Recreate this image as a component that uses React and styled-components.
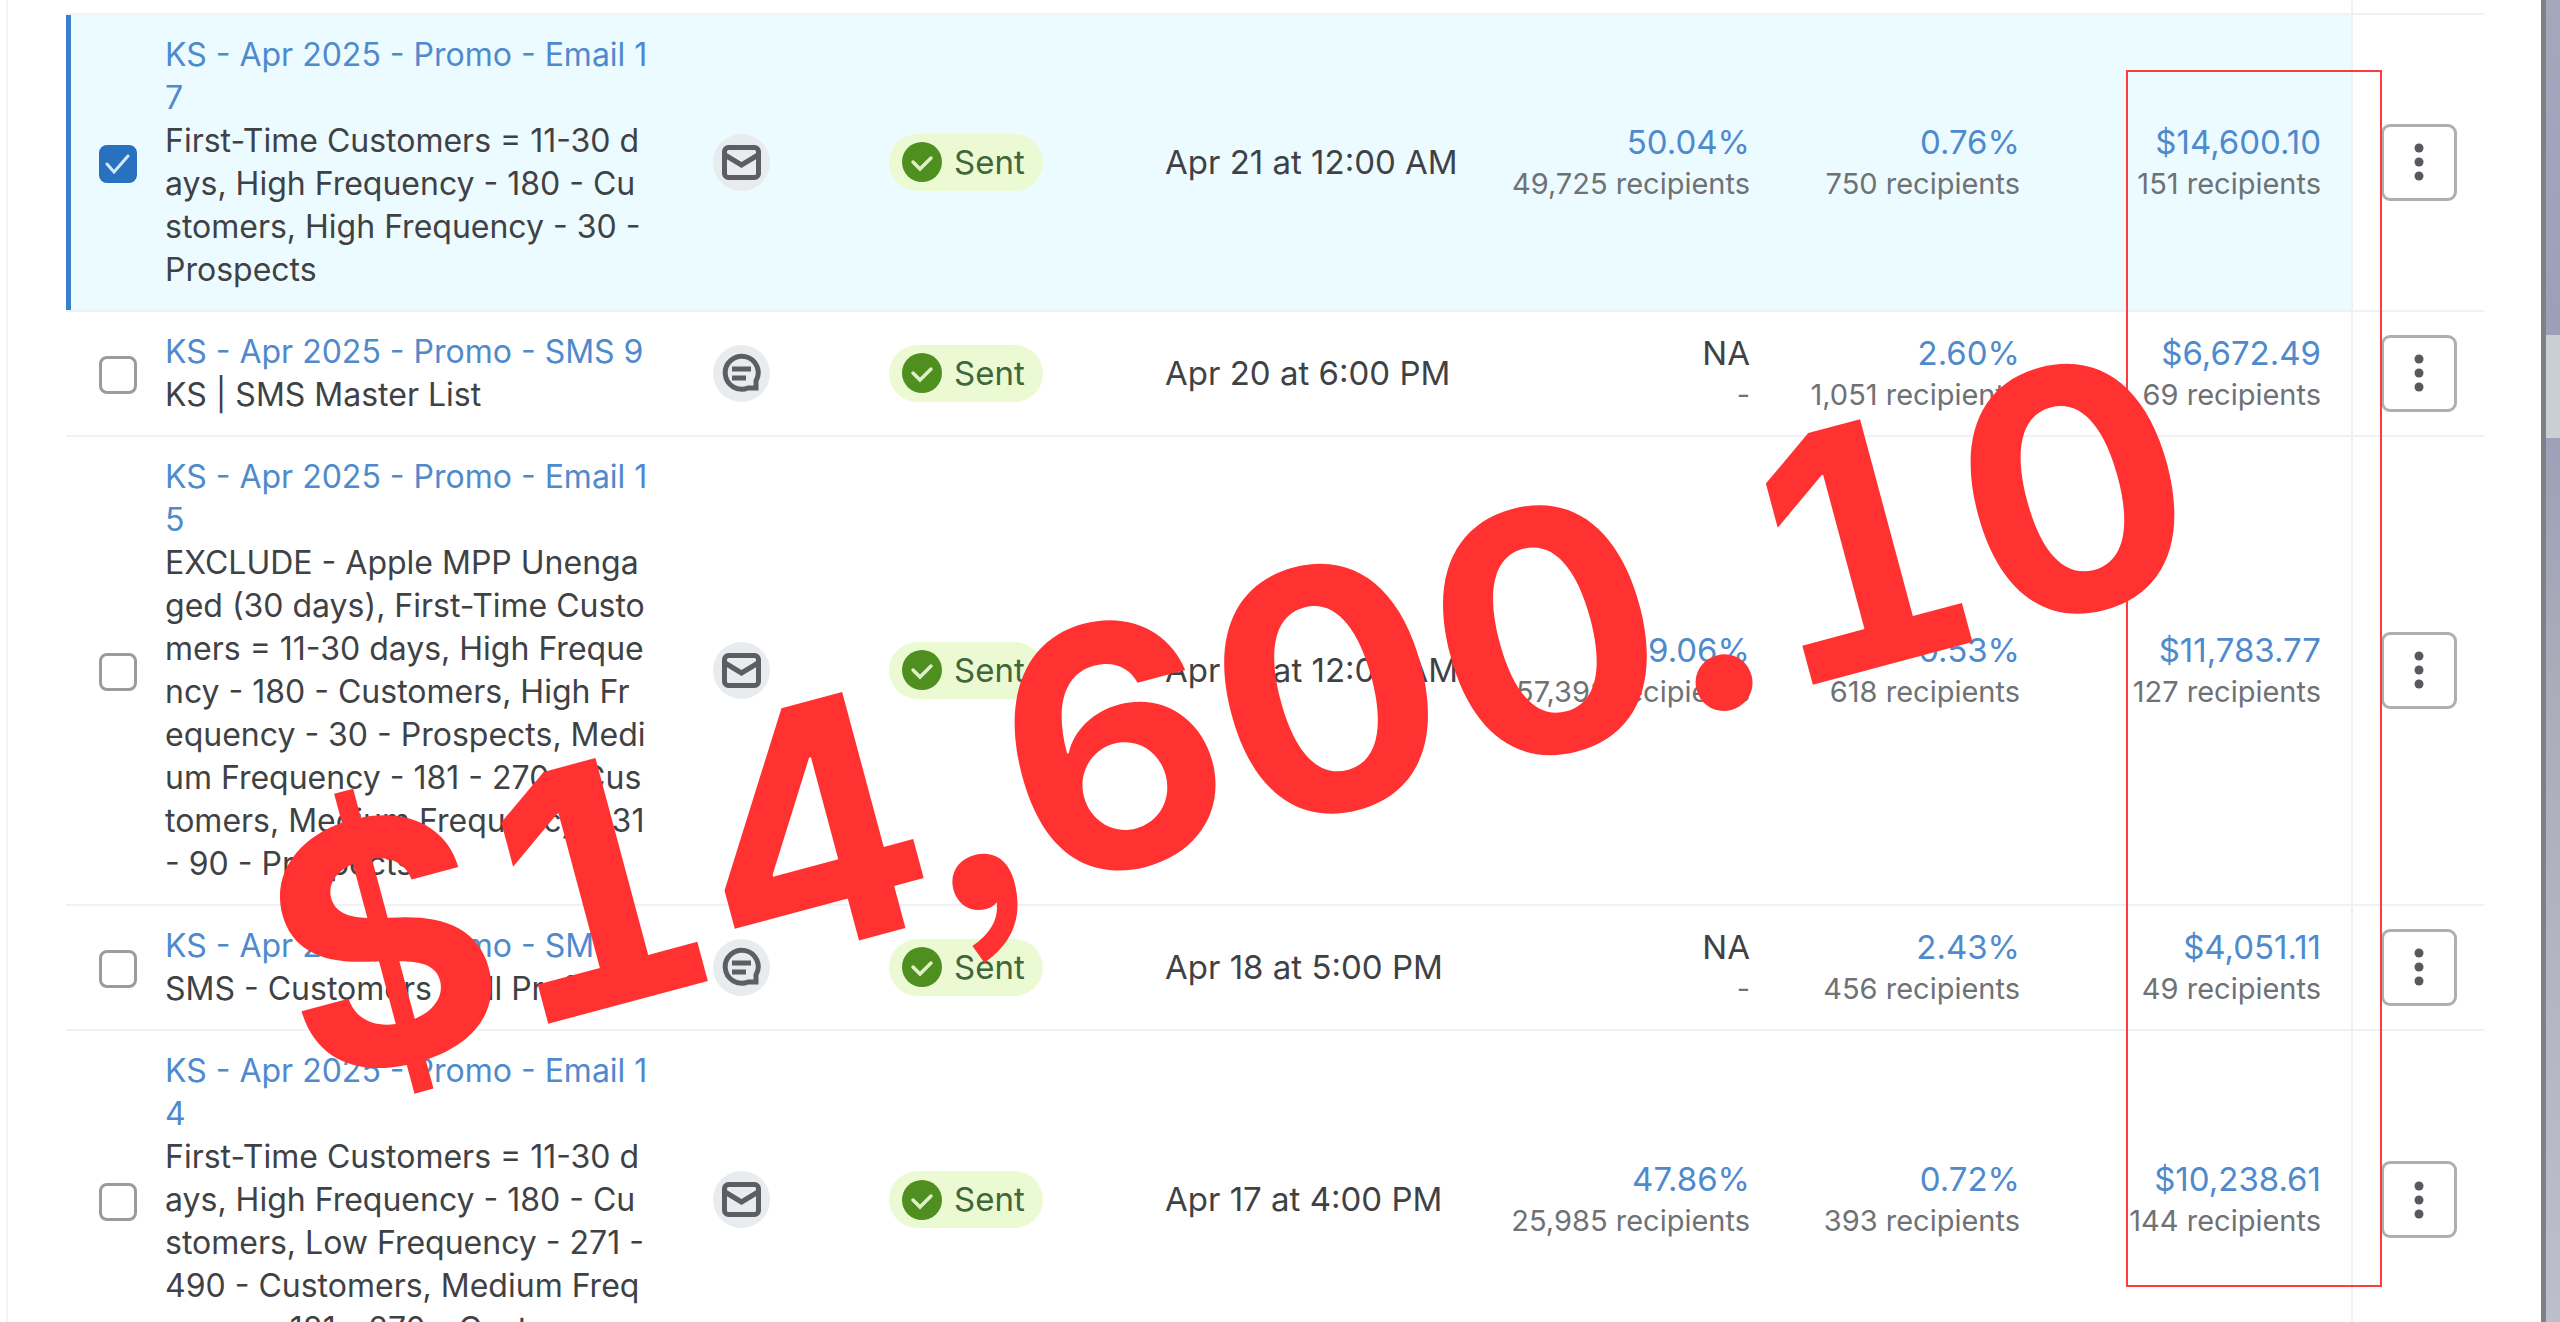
import React from "react";
import styled, { createGlobalStyle, css } from "styled-components";

const GlobalStyle = createGlobalStyle`
  * { box-sizing: border-box; }
  body {
    margin: 0;
    background: #fff;
    color: #3f4245;
    font-family: Inter, "Liberation Sans", sans-serif;
    font-size: 33px;
    line-height: 43px;
  }
`;

const Screen = styled.div`
  position: relative;
  display: flex;
  height: 100vh;
  padding-left: 6px;
  overflow: hidden;
`;

const Page = styled.main`
  flex: 1;
  min-width: 0;
  padding: 0 57px 0 58px;
  border-left: 2px solid #f2f3f4;
`;

const Desktop = styled.div`
  flex: none;
  width: 19px;
  border-left: 5px solid #7d8188;
  background: linear-gradient(
    #a5a8bd 0,
    #9c9fb6 335px,
    #c9cfd3 335px,
    #c9cfd3 438px,
    #9da1b7 438px,
    #acadba 700px,
    #bcbfcb 100%
  );
`;

const Table = styled.table`
  width: 100%;
  table-layout: fixed;
  border-collapse: separate;
  border-spacing: 0;
`;

const Col = styled.col`
  width: ${(p) => p.$w}px;
`;

const Cell = styled.td`
  padding: 18px 0 19px;
  border-bottom: 2px solid #eff2f4;
  vertical-align: middle;
  text-align: ${(p) => (p.$end ? "right" : "left")};
  white-space: nowrap;
`;

const SelectCell = styled(Cell)`
  padding-left: 33px;
`;

const NameCell = styled(Cell)`
  font-size: 32px;
`;

const ChannelCell = styled(Cell)`
  padding-left: 28px;
`;

const RevenueCell = styled(Cell)`
  padding-right: 30px;
`;

const ActionCell = styled(Cell)`
  padding-left: 28px;
  border-left: 2px solid #eff2f4;
`;

const Row = styled.tr`
  ${(p) =>
    p.$selected &&
    css`
      ${Cell}:not(${ActionCell}) {
        background: #ecfbff;
      }
      ${SelectCell} {
        box-shadow: inset 5px 0 #3c7fcb;
      }
    `}
`;

const TailCell = styled.td`
  height: 15px;
  padding: 0;
  border-bottom: 2px solid #eff2f4;
  border-left: ${(p) => (p.$divided ? "2px solid #eff2f4" : "0")};
`;

const Check = styled.input`
  display: block;
  appearance: none;
  width: 38px;
  height: 38px;
  margin: 4px 0 0;
  border: 3px solid #999b9d;
  border-radius: 8px;
  background: #fff;

  &:checked {
    border-color: #2871bf;
    background: #2871bf
      url("data:image/svg+xml,%3Csvg xmlns='http://www.w3.org/2000/svg' viewBox='0 0 32 32' fill='none' stroke='%23d5e8f8' stroke-width='3' stroke-linecap='round'%3E%3Cpath d='M5 16l7 8L26 8'/%3E%3C/svg%3E")
      center / 32px no-repeat;
  }
`;

const Title = styled.a`
  display: block;
  color: #4f8acd;
  text-decoration: none;
  white-space: pre-line;
`;

const Audience = styled.div`
  white-space: pre-line;
`;

const Channel = styled.span`
  display: flex;
  align-items: center;
  justify-content: center;
  width: 57px;
  height: 57px;
  border-radius: 50%;
  background: #e9ecef;
`;

const Badge = styled.span`
  display: inline-flex;
  align-items: center;
  gap: 12px;
  height: 57px;
  padding: 0 18px 0 13px;
  border-radius: 29px;
  background: #ebfad3;
  color: #41663a;
  vertical-align: middle;
`;

const Metric = styled.a`
  display: block;
  color: #4f8acd;
  text-decoration: none;
`;

const Missing = styled.div`
  color: #3f4245;
`;

const Recipients = styled.div`
  color: #6f7275;
  font-size: 29px;
  line-height: 40px;
`;

const MenuButton = styled.button`
  display: flex;
  align-items: center;
  justify-content: center;
  width: 76px;
  height: 77px;
  padding: 0;
  border: 3px solid #adafb0;
  border-radius: 9px;
  background: #fff;
`;

const Highlight = styled.div`
  position: absolute;
  top: 70px;
  right: 178px;
  width: 256px;
  height: 1217px;
  border: 2px solid #ff3b3b;
  pointer-events: none;
`;

const Callout = styled.div`
  position: absolute;
  top: 715px;
  left: 48%;
  color: #ff3131;
  font-feature-settings: "ss03";
  font-size: 336px;
  font-weight: 700;
  line-height: 1;
  white-space: nowrap;
  transform: translate(-50%, -50%) rotate(-15deg);
  pointer-events: none;
`;

const FootedDigit = styled.span`
  font-variant-numeric: tabular-nums;
`;

const MailIcon = () => (
  <svg width="41" height="37" viewBox="0 0 41 37" fill="none" stroke="#5b5e62" strokeWidth="5">
    <rect x="3.500" y="3.500" width="34" height="30" rx="4" />
    <path d="M4 11l16.500 10L37 11" />
  </svg>
);

const SmsIcon = () => (
  <svg width="41" height="40" viewBox="0 0 41 40" fill="none" stroke="#5b5e62" strokeWidth="5">
    <path d="M35 35V28A16.500 16.500 0 1 0 27 35z" />
    <path d="M11 16h19M11 25h14" />
  </svg>
);

const SentIcon = () => (
  <svg width="40" height="40" viewBox="0 0 40 40" fill="none">
    <circle cx="20" cy="20" r="20" fill="#4f8f20" />
    <path d="M11 20l7 7 11-11" stroke="#dff2c6" strokeWidth="3.500" strokeLinecap="round" />
  </svg>
);

const DotsIcon = () => (
  <svg width="12" height="40" viewBox="0 0 12 40" fill="#56595d">
    <circle cx="6" cy="6" r="4.500" />
    <circle cx="6" cy="20" r="4.500" />
    <circle cx="6" cy="34" r="4.500" />
  </svg>
);

const campaigns = [
  {
    id: "email-17",
    selected: true,
    title: "KS - Apr 2025 - Promo - Email 1\n7",
    audience:
      "First-Time Customers = 11-30 d\nays, High Frequency - 180 - Cu\nstomers, High Frequency - 30 -\nProspects",
    channel: "email",
    date: "Apr 21 at 12:00 AM",
    opens: ["50.04%", "49,725 recipients"],
    clicks: ["0.76%", "750 recipients"],
    revenue: ["$14,600.10", "151 recipients"],
  },
  {
    id: "sms-9",
    title: "KS - Apr 2025 - Promo - SMS 9",
    audience: "KS | SMS Master List",
    channel: "sms",
    date: "Apr 20 at 6:00 PM",
    clicks: ["2.60%", "1,051 recipients"],
    revenue: ["$6,672.49", "69 recipients"],
  },
  {
    id: "email-15",
    title: "KS - Apr 2025 - Promo - Email 1\n5",
    audience:
      "EXCLUDE - Apple MPP Unenga\nged (30 days), First-Time Custo\nmers = 11-30 days, High Freque\nncy - 180 - Customers, High Fr\nequency - 30 - Prospects, Medi\num Frequency - 181 - 270 - Cus\ntomers, Medium Frequency - 31\n- 90 - Prospects",
    channel: "email",
    date: "Apr 19 at 12:00 AM",
    opens: ["49.06%", "57,392 recipients"],
    clicks: ["0.53%", "618 recipients"],
    revenue: ["$11,783.77", "127 recipients"],
  },
  {
    id: "sms-8",
    title: "KS - Apr 2025 - Promo - SMS 8",
    audience: "SMS - Customers - All Profiles",
    channel: "sms",
    date: "Apr 18 at 5:00 PM",
    clicks: ["2.43%", "456 recipients"],
    revenue: ["$4,051.11", "49 recipients"],
  },
  {
    id: "email-14",
    title: "KS - Apr 2025 - Promo - Email 1\n4",
    audience:
      "First-Time Customers = 11-30 d\nays, High Frequency - 180 - Cu\nstomers, Low Frequency - 271 -\n490 - Customers, Medium Freq\nuency - 181 - 270 - Customers",
    channel: "email",
    date: "Apr 17 at 4:00 PM",
    opens: ["47.86%", "25,985 recipients"],
    clicks: ["0.72%", "393 recipients"],
    revenue: ["$10,238.61", "144 recipients"],
  },
];

const columns = [99, 520, 204, 276, null, 260, 270, 331, 133];

function Stat({ value }) {
  if (!value) {
    return (
      <>
        <Missing>NA</Missing>
        <Recipients>-</Recipients>
      </>
    );
  }
  return (
    <>
      <Metric href="#">{value[0]}</Metric>
      <Recipients>{value[1]}</Recipients>
    </>
  );
}

function CampaignRow({ campaign }) {
  return (
    <Row $selected={campaign.selected}>
      <SelectCell>
        <Check
          type="checkbox"
          defaultChecked={campaign.selected}
          aria-labelledby={campaign.id}
        />
      </SelectCell>
      <NameCell>
        <Title id={campaign.id} href="#">
          {campaign.title}
        </Title>
        <Audience>{campaign.audience}</Audience>
      </NameCell>
      <ChannelCell>
        <Channel>{campaign.channel === "sms" ? <SmsIcon /> : <MailIcon />}</Channel>
      </ChannelCell>
      <Cell>
        <Badge>
          <SentIcon />
          Sent
        </Badge>
      </Cell>
      <Cell>{campaign.date}</Cell>
      <Cell $end>
        <Stat value={campaign.opens} />
      </Cell>
      <Cell $end>
        <Stat value={campaign.clicks} />
      </Cell>
      <RevenueCell $end>
        <Stat value={campaign.revenue} />
      </RevenueCell>
      <ActionCell>
        <MenuButton type="button" aria-label="Campaign actions">
          <DotsIcon />
        </MenuButton>
      </ActionCell>
    </Row>
  );
}

export default function App() {
  return (
    <>
      <GlobalStyle />
      <Screen>
        <Page>
          <Table>
            <colgroup>
              {columns.map((w, i) => (w ? <Col key={i} $w={w} /> : <col key={i} />))}
            </colgroup>
            <tbody>
              <tr>
                <TailCell colSpan={8} />
                <TailCell $divided />
              </tr>
              {campaigns.map((c) => (
                <CampaignRow key={c.id} campaign={c} />
              ))}
            </tbody>
          </Table>
        </Page>
        <Desktop />
        <Highlight />
        <Callout>
          $<FootedDigit>1</FootedDigit>4,600.<FootedDigit>1</FootedDigit>0
        </Callout>
      </Screen>
    </>
  );
}
